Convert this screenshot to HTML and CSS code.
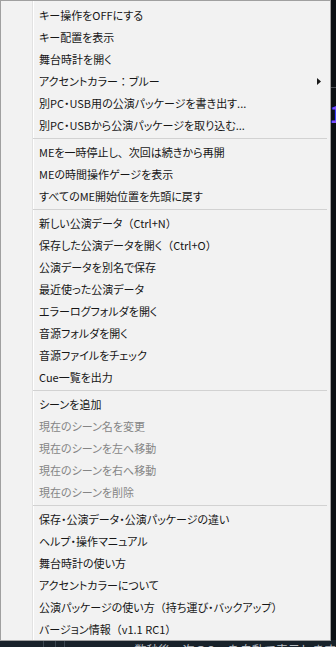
FILE: index.html
```html
<!DOCTYPE html>
<html lang="ja">
<head>
<meta charset="utf-8">
<title>メニュー</title>
<link rel="stylesheet" href="styles.css">
</head>
<body>
<div class="app">
  <div class="app-header"></div>
  <div class="app-cue">1</div>
  <div class="app-spacer"></div>
  <div class="status">
    <span class="status-cell w1"></span><span class="status-cell w2"></span><span class="status-cell w3"></span>
    <span class="status-text">数秒後、次のCueを自動で表示します</span>
  </div>
</div>

<div class="menu" role="menu">
  <div class="item">キー操作をOFFにする</div>
  <div class="item">キー配置を表示</div>
  <div class="item">舞台時計を開く</div>
  <div class="item sub"><span>アクセントカラー<span class="fw">：</span>ブルー</span><svg class="arrow" width="4" height="7" viewBox="0 0 4 7"><path d="M0 0 L4 3.5 L0 7 Z" fill="#1a1a1a"/></svg></div>
  <div class="item">別PC・USB用の公演パッケージを書き出す...</div>
  <div class="item">別PC・USBから公演パッケージを取り込む...</div>
  <div class="sep"></div>
  <div class="item">MEを一時停止し<span class="fw">、</span>次回は続きから再開</div>
  <div class="item">MEの時間操作ゲージを表示</div>
  <div class="item">すべてのME開始位置を先頭に戻す</div>
  <div class="sep"></div>
  <div class="item">新しい公演データ<span class="fw">（</span>Ctrl+N<span class="fw">）</span></div>
  <div class="item">保存した公演データを開く<span class="fw">（</span>Ctrl+O<span class="fw">）</span></div>
  <div class="item">公演データを別名で保存</div>
  <div class="item">最近使った公演データ</div>
  <div class="item">エラーログフォルダを開く</div>
  <div class="item">音源フォルダを開く</div>
  <div class="item">音源ファイルをチェック</div>
  <div class="item">Cue一覧を出力</div>
  <div class="sep"></div>
  <div class="item">シーンを追加</div>
  <div class="item disabled">現在のシーン名を変更</div>
  <div class="item disabled">現在のシーンを左へ移動</div>
  <div class="item disabled">現在のシーンを右へ移動</div>
  <div class="item disabled">現在のシーンを削除</div>
  <div class="sep"></div>
  <div class="item">保存・公演データ・公演パッケージの違い</div>
  <div class="item">ヘルプ・操作マニュアル</div>
  <div class="item">舞台時計の使い方</div>
  <div class="item">アクセントカラーについて</div>
  <div class="item">公演パッケージの使い方<span class="fw">（</span>持ち運び・バックアップ<span class="fw">）</span></div>
  <div class="item">バージョン情報<span class="fw">（</span>v1.1 RC1<span class="fw">）</span></div>
</div>
</body>
</html>
```

FILE: styles.css
```css
html, body {
  margin: 0;
  padding: 0;
  width: 336px;
  height: 647px;
  overflow: hidden;
  background: #0b1014;
  font-family: "Noto Sans CJK JP", "Noto Sans", sans-serif;
}

.app {
  display: flex;
  flex-direction: column;
  height: 647px;
}

.app-header {
  height: 87px;
  border-bottom: 1px solid #4a4f55;
  flex: none;
}

.app-cue {
  padding: 14px 0 0 330px;
  font-size: 22px;
  line-height: 22px;
  font-weight: 700;
  color: #7b4dff;
  flex: none;
}

.app-spacer {
  flex: 1;
}

.status {
  flex: none;
  height: 24px;
  margin-bottom: -17px;
  background: #18222a;
  display: flex;
  align-items: flex-start;
}

.status-cell {
  height: 24px;
  border-right: 1px solid #3a4650;
}
.status-cell.w1 { width: 85px; }
.status-cell.w2 { width: 22px; }
.status-cell.w3 { width: 14px; }

.status-text {
  margin-left: 70px;
  font-size: 12px;
  line-height: 14px;
  color: #b8bec4;
  padding-top: 3px;
  white-space: nowrap;
}

.menu {
  position: absolute;
  top: 0;
  left: 0;
  width: 331px;
  box-sizing: border-box;
  border: 1px solid #a0a0a0;
  padding: 3px 0 0;
  background:
    linear-gradient(to right,
      transparent 31px,
      #e2e2e2 31px, #e2e2e2 32px,
      #ffffff 32px, #ffffff 33px,
      transparent 33px),
    #f2f2f2;
  font-size: 11px;
  font-weight: 400;
  color: #161616;
  font-feature-settings: "palt";
}

.fw {
  font-feature-settings: normal;
}

.item {
  height: 22px;
  line-height: 22px;
  padding: 0 9px 0 38px;
  white-space: nowrap;
  display: flex;
  align-items: center;
  justify-content: flex-start;
}

.item.sub {
  justify-content: space-between;
}

.item.sub > span {
  display: block;
}

.item.disabled {
  color: #858585;
}

.arrow {
  display: block;
  flex: none;
}

.sep {
  height: 1px;
  margin: 2px 3px 2px 32px;
  background: #d2d2d2;
}
```
